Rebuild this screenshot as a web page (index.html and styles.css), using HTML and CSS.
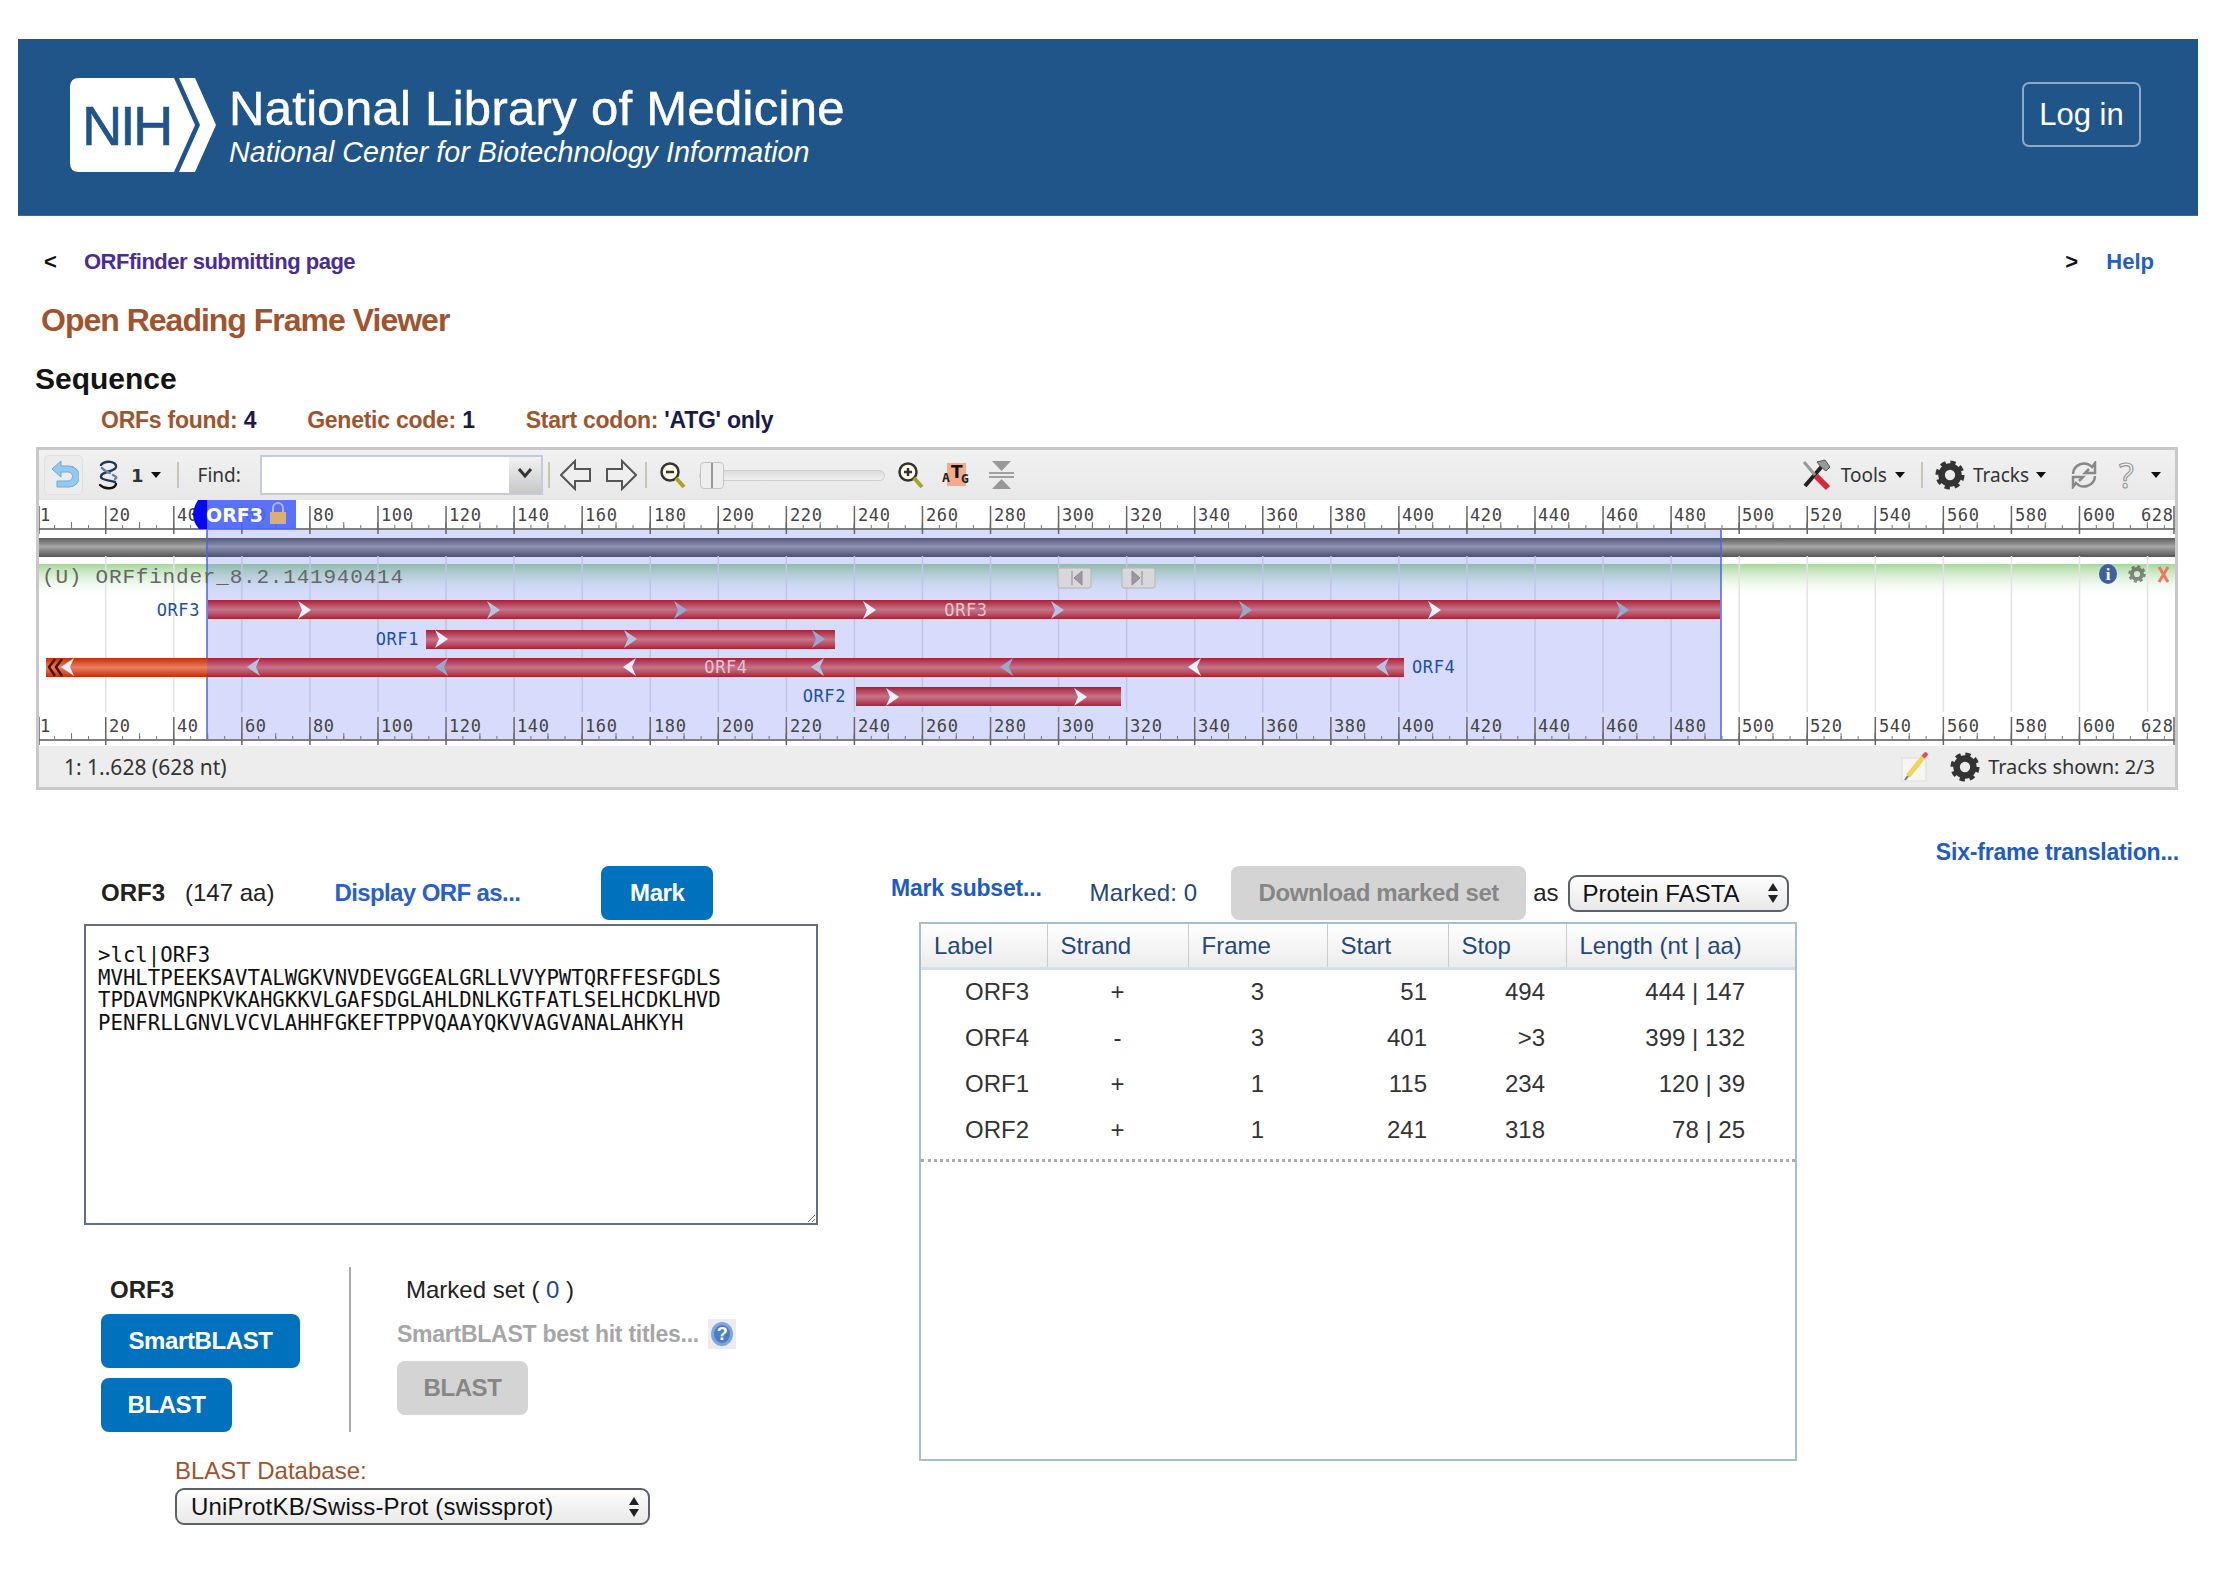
FILE: index.html
```html
<!DOCTYPE html>
<html lang="en">
<head>
  <meta charset="UTF-8" />
  <title>Open Reading Frame Viewer</title>
  <link rel="stylesheet" href="styles.css">
</head>
<body>
  <header class="banner">
    <div class="brand">
      <svg class="nih-logo" width="146" height="94" viewBox="0 0 146 94">
        <path d="M9 0 H104 L125 47 L104 94 H9 Q0 94 0 85 V9 Q0 0 9 0 Z" fill="#fff"/>
        <path d="M109 0 H125 L146 47 L125 94 H109 L130 47 Z" fill="#fff"/>
        <text class="nih-text" x="12" y="67">NIH</text>
      </svg>
      <div class="brand-text">
        <div class="brand-title">National Library of Medicine</div>
        <div class="brand-sub">National Center for Biotechnology Information</div>
      </div>
    </div>
    <button class="login">Log in</button>
  </header>

  <nav class="toplinks">
    <div><span class="chev">&lt;</span><a class="back-link">ORFfinder submitting page</a></div>
    <div><span class="chev chev-right">&gt;</span><a class="help-link">Help</a></div>
  </nav>

  <h1 class="page-title">Open Reading Frame Viewer</h1>
  <h2 class="section-title">Sequence</h2>
  <div class="orf-info">
    <span class="info-item">ORFs found: <b>4</b></span>
    <span class="info-item">Genetic code: <b>1</b></span>
    <span class="info-item">Start codon: <b>'ATG' only</b></span>
  </div>

  <svg class="svg-defs" width="0" height="0">
    <defs>
      <symbol id="gear" viewBox="0 0 32 32">
        <circle cx="16" cy="16" r="9" fill="none" stroke="#333" stroke-width="7"/>
        <circle cx="16" cy="16" r="13.5" fill="none" stroke="#333" stroke-width="4" stroke-dasharray="5.6 5"/>
      </symbol>
      <linearGradient id="barRed" x1="0" y1="0" x2="0" y2="1">
        <stop offset="0" stop-color="#ab1f33"/><stop offset=".25" stop-color="#b94a5f"/>
        <stop offset=".5" stop-color="#c4748a"/><stop offset=".8" stop-color="#b9465c"/>
        <stop offset="1" stop-color="#ab1f33"/>
      </linearGradient>
      <linearGradient id="barOrange" x1="0" y1="0" x2="0" y2="1">
        <stop offset="0" stop-color="#c92a08"/><stop offset=".5" stop-color="#e8805f"/>
        <stop offset="1" stop-color="#c92a08"/>
      </linearGradient>
      <linearGradient id="barGrey" x1="0" y1="0" x2="0" y2="1">
        <stop offset="0" stop-color="#5c5c5c"/><stop offset=".45" stop-color="#a6a6a6"/>
        <stop offset="1" stop-color="#555"/>
      </linearGradient>
      <linearGradient id="trackGreen" x1="0" y1="0" x2="0" y2="1">
        <stop offset="0" stop-color="#a5d79a"/><stop offset="1" stop-color="#fff" stop-opacity="0"/>
      </linearGradient>
      <polygon id="arR" points="-6,-9 7,0 -6,9 -2,0"/>
      <polygon id="arL" points="6,-9 -7,0 6,9 2,0"/>
      <g id="ruler">
        <line x1="37" x2="2175" y1="29" y2="29" stroke="#808080" stroke-width="2"/>
        <line x1="37" x2="2175" y1="26.5" y2="26.5" stroke="#777" stroke-width="3" stroke-dasharray="1 16.015"/>
        <line x1="37" x2="2175" y1="25" y2="25" stroke="#777" stroke-width="6" stroke-dasharray="1 33.03"/>
        <line x1="105" x2="2085" y1="20" y2="20" stroke="#666" stroke-width="28" stroke-dasharray="1.5 66.56"/>
        <line x1="2174" x2="2174" y1="6" y2="34" stroke="#666" stroke-width="1.5"/>
        <line x1="39" x2="39" y1="6" y2="34" stroke="#666" stroke-width="1.5"/>
        <text class="ruler-num" y="21">
          <tspan x="40">1</tspan><tspan x="109">20</tspan><tspan x="177">40</tspan><tspan x="245">60</tspan>
          <tspan x="313">80</tspan><tspan x="381">100</tspan><tspan x="449">120</tspan><tspan x="517">140</tspan>
          <tspan x="585">160</tspan><tspan x="654">180</tspan><tspan x="722">200</tspan><tspan x="790">220</tspan>
          <tspan x="858">240</tspan><tspan x="926">260</tspan><tspan x="994">280</tspan><tspan x="1062">300</tspan>
          <tspan x="1130">320</tspan><tspan x="1198">340</tspan><tspan x="1266">360</tspan><tspan x="1334">380</tspan>
          <tspan x="1402">400</tspan><tspan x="1470">420</tspan><tspan x="1538">440</tspan><tspan x="1606">460</tspan>
          <tspan x="1674">480</tspan><tspan x="1742">500</tspan><tspan x="1810">520</tspan><tspan x="1879">540</tspan>
          <tspan x="1947">560</tspan><tspan x="2015">580</tspan><tspan x="2083">600</tspan><tspan x="2141">628</tspan>
        </text>
      </g>
    </defs>
  </svg>

  <section class="viewer">
    <div class="viewer-toolbar">
      <span class="undo-btn">
        <svg width="30" height="30" viewBox="0 0 30 30"><path d="M3 9 L12 1 V6 H20 A10 10 0 0 1 20 27 H8 V21 H19 A4.5 4.5 0 0 0 19 12 H12 V17 Z" fill="#93c9ef" stroke="#6aa8d8"/></svg>
      </span>
      <svg class="helix" width="27" height="30" viewBox="0 0 27 30" fill="none" stroke-width="2.4" stroke-linecap="round">
        <path d="M6 5 C10 0 22 1 21 7 C20 12 7 11 6 16 C5 20 14 20 20 22" stroke="#1c3a55"/>
        <path d="M21 24 C20 29 10 30 5 25" stroke="#111"/>
        <path d="M7 8 C9 11 13 12 15 13 M18 15 C22 17 22 18 20 19" stroke="#6b8298"/>
      </svg>
      <b class="tb-num">1</b><i class="caret caret-num"></i>
      <span class="tb-sep sep-a"></span>
      <span class="tb-label find-label">Find:</span>
      <span class="find-box"><span class="find-input"></span><span class="find-arrow"><svg width="16" height="12" viewBox="0 0 16 12"><path d="M2 2 L8 9 L14 2" fill="none" stroke="#333" stroke-width="3"/></svg></span></span>
      <span class="tb-sep sep-b"></span>
      <svg class="arrow-l" width="32" height="32" viewBox="0 0 32 32"><polygon points="1,16 15,2 15,10 30,10 30,22 15,22 15,30" fill="#efefef" stroke="#555" stroke-width="2"/></svg>
      <svg class="arrow-r" width="32" height="32" viewBox="0 0 32 32"><polygon points="31,16 17,2 17,10 2,10 2,22 17,22 17,30" fill="#efefef" stroke="#555" stroke-width="2"/></svg>
      <span class="tb-sep sep-c"></span>
      <svg class="zoom-out" width="27" height="28" viewBox="0 0 27 28"><circle cx="11" cy="11" r="8.5" fill="#fdfbe8" stroke="#333" stroke-width="2.5"/><path d="M7 11 H15" stroke="#333" stroke-width="2.5"/><path d="M17 17 L25 26" stroke="#a8a428" stroke-width="4"/></svg>
      <span class="slider"><span class="slider-knob"></span></span>
      <svg class="zoom-in" width="27" height="28" viewBox="0 0 27 28"><circle cx="11" cy="11" r="8.5" fill="#fdfbe8" stroke="#333" stroke-width="2.5"/><path d="M7 11 H15 M11 7 V15" stroke="#333" stroke-width="2.5"/><path d="M17 17 L25 26" stroke="#a8a428" stroke-width="4"/></svg>
      <svg class="atg" width="28" height="24" viewBox="0 0 28 24"><rect x="5" y="0" width="19" height="23" fill="#f2ab8e"/><text class="atg-text" x="0" y="19">A</text><text class="atg-t" x="9" y="15">T</text><text class="atg-text" x="19" y="20">G</text></svg>
      <svg class="fit" width="25" height="28" viewBox="0 0 25 28"><path d="M3 0 H22 L12.5 10 Z M3 28 H22 L12.5 18 Z" fill="#999"/><path d="M0 12 H25 M0 16 H25" stroke="#888" stroke-width="1.5"/></svg>

      <span class="tb-spacer"></span>

      <svg class="tools-icon" width="30" height="32" viewBox="0 0 30 32"><path d="M4 27 L22 6" stroke="#222" stroke-width="4"/><path d="M16 3 L24 1 L29 8 L25 12 L20 8 Z" fill="#999" stroke="#555"/><path d="M3 3 L14 16" stroke="#999" stroke-width="3"/><path d="M15 17 L27 29" stroke="#d8283a" stroke-width="6"/></svg>
      <span class="tb-label tools-label">Tools</span><i class="caret caret-tools"></i>
      <span class="tb-sep sep-d"></span>
      <svg class="gear-icon" width="30" height="30"><use href="#gear"/></svg>
      <span class="tb-label tracks-label">Tracks</span><i class="caret caret-tracks"></i>
      <svg class="refresh" width="28" height="28" viewBox="0 0 28 28" fill="none" stroke="#888" stroke-width="2.5"><path d="M3 13 A11 11 0 0 1 22 6 L25 2 V12 H15 L19 8"/><path d="M25 15 A11 11 0 0 1 6 22 L3 26 V16 H13 L9 20"/></svg>
      <span class="help-q">?</span>
      <i class="caret caret-help"></i>
    </div>

    <svg class="viewer-canvas" width="2136" height="246" viewBox="39 500 2136 246">
      <!-- ruler, grid, seq bar -->
      <rect x="39" y="500" width="2136" height="246" fill="#fff"/>
      <rect x="39" y="538" width="2136" height="19" fill="url(#barGrey)"/>
      <rect x="39" y="564" width="2136" height="34" fill="url(#trackGreen)"/>
      <line x1="105" x2="2175" y1="634" y2="634" stroke="#e3e3e3" stroke-width="156" stroke-dasharray="1.5 66.56"/>
      <rect x="207" y="529" width="1514" height="211" fill="#2846f0" fill-opacity=".19"/>
      <path d="M207 500 V740 M1721 529 V740" stroke="#4a62f2" stroke-width="1.5"/>
      <use href="#ruler" y="500"/>
      <use href="#ruler" y="711"/>

      <!-- selection handle -->
      <path d="M207 500 H198 Q193 508 193 514 Q193 522 199 529 H207 Z" fill="#0808f0"/>
      <rect x="207" y="500" width="89" height="29" fill="#4a66fb" fill-opacity=".92"/>
      <text class="handle-label" x="206" y="522">ORF3</text>
      <path d="M273 513 V508 A5 5 0 0 1 283 508 V513" fill="none" stroke="#b9b4c8" stroke-width="2"/>
      <rect x="270" y="512" width="16" height="12" fill="#d9b071"/>

      <text class="track-title" x="42" y="583">(U) ORFfinder_8.2.141940414</text>

      <!-- orf bars -->
      <rect x="208" y="600" width="1512" height="19" fill="url(#barRed)"/>
      <rect x="426" y="630" width="409" height="19" fill="url(#barRed)"/>
      <rect x="46" y="658" width="161" height="19" fill="url(#barOrange)"/>
      <rect x="207" y="658" width="1197" height="19" fill="url(#barRed)"/>
      <rect x="856" y="687" width="265" height="19" fill="url(#barRed)"/>

      <g class="ar-a"><use href="#arR" x="304" y="610"/><use href="#arR" x="869" y="610"/><use href="#arR" x="1434" y="610"/>
        <use href="#arR" x="441" y="639"/><use href="#arR" x="892" y="697"/><use href="#arR" x="1080" y="697"/>
        <use href="#arL" x="68" y="667"/><use href="#arL" x="630" y="667"/><use href="#arL" x="1195" y="667"/></g>
      <g class="ar-b"><use href="#arR" x="493" y="610"/><use href="#arR" x="1057" y="610"/>
        <use href="#arR" x="630" y="639"/><use href="#arL" x="254" y="667"/><use href="#arL" x="818" y="667"/><use href="#arL" x="1383" y="667"/></g>
      <g class="ar-c"><use href="#arR" x="680" y="610"/><use href="#arR" x="1245" y="610"/><use href="#arR" x="1622" y="610"/>
        <use href="#arR" x="818" y="639"/><use href="#arL" x="442" y="667"/><use href="#arL" x="1007" y="667"/></g>
      <path d="M55 659 L49 667 L55 676 M62 659 L56 667 L62 676" fill="none" stroke="#4a1208" stroke-width="2.5"/>

      <text class="orf-label" x="200" y="616" text-anchor="end">ORF3</text>
      <text class="orf-label" x="419" y="645" text-anchor="end">ORF1</text>
      <text class="orf-label" x="1412" y="673">ORF4</text>
      <text class="orf-label" x="846" y="702" text-anchor="end">ORF2</text>
      <text class="orf-inner" x="966" y="616" text-anchor="middle">ORF3</text>
      <text class="orf-inner" x="726" y="673" text-anchor="middle">ORF4</text>

      <!-- track controls -->
      <g class="nav-btn"><rect x="1058" y="568" width="33" height="20" rx="2"/><path d="M1072 571 V585 M1082 571 L1074 578 L1082 585 Z" class="nav-mark"/></g>
      <g class="nav-btn"><rect x="1122" y="568" width="33" height="20" rx="2"/><path d="M1142 571 V585 M1132 571 L1140 578 L1132 585 Z" class="nav-mark"/></g>
      <ellipse cx="2108" cy="574" rx="9" ry="10" fill="#3f5f9f"/>
      <text class="info-i" x="2108" y="580" text-anchor="middle">i</text>
      <use href="#gear" x="2128" y="565" width="18" height="18" opacity=".55"/>
      <path d="M2159 567 L2168 582 M2168 567 L2159 582" stroke="#ea7a5c" stroke-width="3"/>
    </svg>

    <div class="viewer-footer">
      <span class="range">1: 1..628 (628 nt)</span>
      <svg class="pencil" width="30" height="30" viewBox="0 0 30 30"><rect x="1" y="6" width="24" height="23" fill="#f6f6f0" stroke="#ddd"/><path d="M7 24 L24 3" stroke="#f0d35a" stroke-width="5"/><path d="M22 5 L26 1" stroke="#d8505a" stroke-width="4"/><path d="M4 28 L7 24" stroke="#777" stroke-width="2"/></svg>
      <svg class="gear-foot" width="30" height="30"><use href="#gear"/></svg>
      <span class="tracks-shown">Tracks shown: 2/3</span>
    </div>
  </section>

  <main class="results">
    <div class="left-col">
      <div class="orf-head">
        <b class="orf-name">ORF3</b>
        <span class="orf-len">(147 aa)</span>
        <a class="display-link">Display ORF as...</a>
        <button class="btn btn-mark">Mark</button>
      </div>
      <textarea class="seq-box" spellcheck="false">&gt;lcl|ORF3
MVHLTPEEKSAVTALWGKVNVDEVGGEALGRLLVVYPWTQRFFESFGDLS
TPDAVMGNPKVKAHGKKVLGAFSDGLAHLDNLKGTFATLSELHCDKLHVD
PENFRLLGNVLVCVLAHHFGKEFTPPVQAAYQKVVAGVANALAHKYH</textarea>

      <div class="blast-row">
        <div class="blast-single">
          <div class="blast-name">ORF3</div>
          <button class="btn btn-smart">SmartBLAST</button>
          <button class="btn btn-blast">BLAST</button>
        </div>
        <div class="blast-marked">
          <div class="marked-set">Marked set ( <span class="marked-count">0</span> )</div>
          <div class="best-hit">SmartBLAST best hit titles...
            <span class="help-badge"><svg width="24" height="26" viewBox="0 0 24 26"><ellipse cx="12" cy="13" rx="11" ry="12" fill="#7ea6dc"/><ellipse cx="12" cy="13" rx="8" ry="9" fill="#4a7cc8"/><text class="badge-q" x="12" y="19" text-anchor="middle">?</text></svg></span>
          </div>
          <button class="btn btn-off btn-blast-off">BLAST</button>
        </div>
      </div>

      <div class="db-block">
        <div class="db-label">BLAST Database:</div>
        <div class="select-wrap db-select">
          <select><option>UniProtKB/Swiss-Prot (swissprot)</option></select>
          <svg class="updown" width="12" height="22" viewBox="0 0 12 22"><path d="M6 1 L11 9 H1 Z M6 21 L11 13 H1 Z" fill="#222"/></svg>
        </div>
      </div>
    </div>

    <div class="right-col">
      <div class="six-frame"><a>Six-frame translation...</a></div>
      <div class="table-tools">
        <a class="mark-subset">Mark subset...</a>
        <span class="marked-num">Marked: 0</span>
        <button class="btn btn-off btn-download">Download marked set</button>
        <span class="as-word">as</span>
        <div class="select-wrap format-select">
          <select><option>Protein FASTA</option></select>
          <svg class="updown" width="12" height="22" viewBox="0 0 12 22"><path d="M6 1 L11 9 H1 Z M6 21 L11 13 H1 Z" fill="#222"/></svg>
        </div>
      </div>
      <div class="table-box">
        <table class="orf-table">
          <thead>
            <tr><th class="c-label">Label</th><th class="c-strand">Strand</th><th class="c-frame">Frame</th><th class="c-start">Start</th><th class="c-stop">Stop</th><th class="c-length">Length (nt | aa)</th></tr>
          </thead>
          <tbody>
            <tr><td class="c-label">ORF3</td><td class="c-strand">+</td><td class="c-frame">3</td><td class="c-start">51</td><td class="c-stop">494</td><td class="c-length">444 | 147</td></tr>
            <tr><td class="c-label">ORF4</td><td class="c-strand">-</td><td class="c-frame">3</td><td class="c-start">401</td><td class="c-stop">&gt;3</td><td class="c-length">399 | 132</td></tr>
            <tr><td class="c-label">ORF1</td><td class="c-strand">+</td><td class="c-frame">1</td><td class="c-start">115</td><td class="c-stop">234</td><td class="c-length">120 | 39</td></tr>
            <tr><td class="c-label">ORF2</td><td class="c-strand">+</td><td class="c-frame">1</td><td class="c-start">241</td><td class="c-stop">318</td><td class="c-length">78 | 25</td></tr>
          </tbody>
        </table>
        <div class="table-rule"></div>
      </div>
    </div>
  </main>
</body>
</html>
```

FILE: styles.css
```css
* {
  box-sizing: border-box;
}

body {
  margin: 0;
  padding: 39px 0 0;
  background-color: #fff;
  color: #222;
  font-family: "Liberation Sans", Arial, sans-serif;
}

a {
  cursor: pointer;
}

/* banner */
.banner {
  display: flex;
  justify-content: space-between;
  align-items: center;
  height: 177px;
  margin: 0 24px 0 18px;
  padding: 0 57px 5px 52px;
  background-color: #20558a;
  border-bottom: 1px solid #3a6a9a;
  color: #fff;
}

.brand {
  display: flex;
  align-items: center;
  gap: 13px;
}

.nih-logo {
  display: block;
}

.nih-text {
  font-size: 56px;
  letter-spacing: -2.5px;
  fill: #20558a;
  stroke: #20558a;
  stroke-width: .6px;
}

.brand-title {
  font-size: 49px;
  letter-spacing: .3px;
  line-height: 54px;
  -webkit-text-stroke: .5px #fff;
}

.brand-sub {
  font-size: 28.7px;
  font-style: italic;
  line-height: 34px;
}

.login {
  align-self: flex-start;
  width: 119px;
  height: 65px;
  margin-top: 43px;
  padding: 0;
  background: transparent;
  border: 2px solid #8ea9c6;
  border-radius: 7px;
  color: #fff;
  font-family: inherit;
  font-size: 31px;
}

/* top of page */
.toplinks {
  display: flex;
  justify-content: space-between;
  align-items: center;
  height: 36px;
  margin: 28px 68px 0 44px;
  font-size: 22px;
  font-weight: 700;
}

.chev {
  display: inline-block;
  width: 40px;
  color: #111;
}

.chev-right {
  width: 41px;
}

.back-link {
  color: #4b2c97;
  letter-spacing: -.5px;
}

.help-link {
  color: #2460c4;
}

.page-title {
  height: 40px;
  margin: 20px 0 0 41px;
  color: #a0542e;
  font-size: 32px;
  letter-spacing: -1px;
  line-height: 40px;
}

.section-title {
  height: 40px;
  margin: 19px 0 0 35px;
  color: #141414;
  font-size: 30px;
  line-height: 40px;
}

.orf-info {
  display: flex;
  height: 32px;
  margin: 5px 0 0 101px;
  color: #a0542e;
  font-size: 23px;
  font-weight: 700;
  letter-spacing: -.25px;
  line-height: 33px;
}

.orf-info b {
  color: #1a1a4a;
}

.info-item {
  margin-right: 51px;
}

.svg-defs {
  position: absolute;
}

/* viewer */
.viewer {
  width: 2142px;
  height: 343px;
  margin: 11px 0 0 36px;
  background-color: #ededed;
  border: 3px solid #c9c7c7;
}

.viewer-toolbar {
  display: flex;
  align-items: center;
  height: 50px;
  padding: 0 14px 0 5px;
  background: linear-gradient(#f1f1f1, #e8e8e8);
  font-family: "Noto Sans", sans-serif;
  font-size: 19px;
  color: #333;
}

.viewer-toolbar svg {
  flex: none;
}

.viewer-canvas {
  display: block;
}

.undo-btn {
  display: flex;
  justify-content: center;
  align-items: center;
  width: 39px;
  height: 40px;
  background-color: #ececec;
  border: 1px solid #e0e0e0;
  border-radius: 5px;
}

.helix {
  margin-left: 12px;
}

.tb-num {
  margin-left: 9px;
  font-family: "DejaVu Sans", sans-serif;
  font-size: 18px;
}

.caret {
  flex: none;
  width: 0;
  height: 0;
  border-top: 6px solid #111;
  border-left: 5px solid transparent;
  border-right: 5px solid transparent;
}

.caret-num {
  margin-left: 7px;
}

.tb-sep {
  flex: none;
  width: 2px;
  height: 26px;
  background-color: #c8c4b8;
}

.sep-a {
  margin-left: 16px;
}

.find-label {
  margin-left: 19px;
}

.find-box {
  display: flex;
  width: 283px;
  height: 40px;
  margin-left: 19px;
  border: 2px solid #c5cbd8;
}

.find-input {
  flex: 1;
  background-color: #fff;
}

.find-arrow {
  display: flex;
  justify-content: center;
  align-items: flex-start;
  width: 32px;
  padding-top: 10px;
  background: linear-gradient(#f2f2f2, #c8c8c8);
}

.sep-b {
  margin-left: 5px;
}

.arrow-l {
  margin-left: 10px;
}

.arrow-r {
  margin-left: 13px;
}

.sep-c {
  margin-left: 8px;
}

.zoom-out {
  margin-left: 12px;
}

.slider {
  position: relative;
  flex: none;
  width: 186px;
  height: 11px;
  margin-left: 13px;
  background: linear-gradient(#dcdcdc, #f0f0f0);
  border: 1px solid #cfcfcf;
  border-radius: 6px;
}

.slider-knob {
  position: absolute;
  left: 0;
  top: -9px;
  width: 24px;
  height: 27px;
  background: linear-gradient(90deg, #eee 45%, #999 45%, #999 55%, #eee 55%);
  border: 1px solid #c4c4c4;
  border-radius: 4px;
}

.zoom-in {
  margin-left: 12px;
}

.atg {
  margin-left: 18px;
}

.atg-text {
  font-family: "DejaVu Sans Mono", monospace;
  font-size: 13px;
  font-weight: 700;
  fill: #222;
}

.atg-t {
  font-family: "DejaVu Sans", sans-serif;
  font-size: 17px;
  font-weight: 700;
  fill: #111;
}

.fit {
  margin-left: 19px;
}

.tb-spacer {
  flex: 1;
}

.tools-label {
  margin-left: 10px;
}

.caret-tools {
  margin-left: 8px;
}

.sep-d {
  margin-left: 16px;
}

.gear-icon {
  margin-left: 12px;
}

.tracks-label {
  margin-left: 8px;
}

.caret-tracks {
  margin-left: 7px;
}

.refresh {
  margin-left: 24px;
}

.help-q {
  width: 19px;
  margin-left: 21px;
  color: #f2f2f2;
  font-size: 34px;
  line-height: 32px;
  -webkit-text-stroke: 1.2px #999;
}

.caret-help {
  margin-left: 13px;
}

.ruler-num {
  font-family: "DejaVu Sans Mono", monospace;
  font-size: 17px;
  letter-spacing: .6px;
  fill: #444;
}

.handle-label {
  font-family: "DejaVu Sans", sans-serif;
  font-size: 19px;
  font-weight: 700;
  fill: #fff;
}

.track-title {
  font-family: "Liberation Mono", monospace;
  font-size: 21px;
  letter-spacing: .8px;
  fill: #666;
}

.orf-label {
  font-family: "DejaVu Sans Mono", monospace;
  font-size: 17px;
  letter-spacing: .6px;
  fill: #1b50a5;
}

.orf-inner {
  font-family: "DejaVu Sans Mono", monospace;
  font-size: 17px;
  letter-spacing: .6px;
  fill: #e4c6d0;
}

.ar-a {
  fill: #eef0fb;
}

.ar-b {
  fill: #b9c1e2;
}

.ar-c {
  fill: #9aa7cf;
}

.nav-btn rect {
  fill: #d8d8dc;
  stroke: #b4b4b8;
}

.nav-mark {
  fill: #9a9aa0;
  stroke: #8a8a90;
}

.info-i {
  font-family: "Liberation Serif", serif;
  font-size: 17px;
  font-weight: 700;
  fill: #fff;
}

.viewer-footer {
  display: flex;
  align-items: center;
  height: 41px;
  padding: 0 20px 0 25px;
  background-color: #ededed;
  font-family: "Noto Sans", sans-serif;
  font-size: 20px;
  color: #333;
}

.range {
  flex: 1;
  font-size: 21px;
}

.gear-foot {
  margin-left: 19px;
}

.tracks-shown {
  margin-left: 8px;
}

/* bottom area */
.results {
  display: flex;
  margin-top: 48px;
}

.left-col {
  flex: none;
  width: 734px;
  margin-left: 84px;
  padding-top: 28px;
}

.right-col {
  flex: none;
  width: 1288px;
  margin-left: 73px;
}

.btn {
  display: block;
  height: 54px;
  padding: 0;
  background-color: #0071bc;
  border: none;
  border-radius: 8px;
  color: #fff;
  font-family: inherit;
  font-size: 24px;
  font-weight: 700;
  letter-spacing: -.4px;
}

.btn-off {
  background-color: #d4d4d4;
  color: #868686;
}

.orf-head {
  display: flex;
  align-items: center;
  height: 54px;
  padding-left: 17px;
  font-size: 24px;
}

.orf-len {
  margin-left: 20px;
}

.display-link {
  margin-left: 60px;
  color: #2a5fc9;
  font-weight: 700;
  letter-spacing: -.6px;
}

.btn-mark {
  width: 112px;
  margin-left: 81px;
}

.seq-box {
  display: block;
  width: 734px;
  height: 301px;
  margin-top: 4px;
  padding: 18px 12px;
  background-color: #fff;
  border: 2px solid #666e7c;
  color: #111;
  font-family: "DejaVu Sans Mono", monospace;
  font-size: 20.7px;
  line-height: 22.6px;
  overflow: hidden;
}

.blast-row {
  display: flex;
  height: 165px;
  margin-top: 42px;
  font-size: 24px;
}

.blast-single {
  width: 267px;
  padding-left: 17px;
  border-right: 2px solid #aaa;
}

.blast-name {
  height: 47px;
  padding-left: 9px;
  font-weight: 700;
  line-height: 46px;
}

.btn-smart {
  width: 199px;
}

.btn-blast {
  width: 131px;
  margin-top: 10px;
}

.blast-marked {
  padding-left: 46px;
}

.marked-set {
  height: 52px;
  padding-left: 9px;
  line-height: 46px;
}

.marked-count {
  color: #1f4a8c;
}

.best-hit {
  display: flex;
  align-items: center;
  gap: 9px;
  height: 30px;
  color: #a6a6a6;
  font-weight: 700;
  font-size: 23px;
  letter-spacing: -.25px;
}

.help-badge {
  display: flex;
  justify-content: center;
  align-items: center;
  width: 28px;
  height: 30px;
  background-color: #ebebf0;
}

.badge-q {
  font-size: 18px;
  font-weight: 700;
  fill: #fff;
}

.btn-blast-off {
  width: 131px;
  margin-top: 12px;
}

.db-block {
  margin: 24px 0 0 91px;
}

.db-label {
  height: 30px;
  color: #a0542e;
  font-size: 24px;
  line-height: 30px;
}

.select-wrap {
  position: relative;
}

.select-wrap select {
  display: block;
  width: 100%;
  height: 100%;
  appearance: none;
  background: linear-gradient(#fdfdfd, #e9e9e9);
  border: 2px solid #5c6068;
  border-radius: 9px;
  color: #111;
  font-family: inherit;
  font-size: 24px;
}

.updown {
  position: absolute;
  right: 10px;
  top: 50%;
  margin-top: -11px;
}

.db-select {
  width: 475px;
  height: 37px;
  margin-top: 2px;
}

.db-select select {
  padding-left: 14px;
  letter-spacing: .2px;
}

.format-select {
  width: 221px;
  height: 37px;
  margin-left: 9px;
}

.format-select select {
  padding-left: 13px;
}

.six-frame {
  height: 28px;
  color: #1f5bc4;
  font-size: 23px;
  font-weight: 700;
  letter-spacing: -.2px;
  line-height: 28px;
  text-align: right;
}

.table-tools {
  display: flex;
  align-items: center;
  height: 54px;
  font-size: 24px;
}

.mark-subset {
  margin-bottom: 10px;
  color: #1f5bc4;
  font-size: 23px;
  font-weight: 700;
  letter-spacing: -.2px;
}

.marked-num {
  margin-left: 48px;
  color: #24477c;
  letter-spacing: .1px;
}

.btn-download {
  width: 295px;
  margin-left: 34px;
}

.as-word {
  margin-left: 7px;
}

.table-box {
  width: 878px;
  height: 539px;
  margin: 2px 0 0 28px;
  border: 2px solid #a6bdd8;
}

.orf-table {
  width: 874px;
  border-collapse: collapse;
  table-layout: fixed;
  font-size: 24px;
}

.orf-table th {
  height: 44px;
  padding: 2px 0 0 13px;
  background: linear-gradient(#fff, #ececec);
  border-bottom: 3px solid #d5e0ea;
  border-right: 1px solid #c8cdd2;
  color: #24477c;
  font-weight: 400;
  text-align: left;
}

.orf-table th:last-child {
  border-right: none;
}

.orf-table td {
  height: 46.4px;
  padding: 0;
  color: #333;
}

th.c-label { width: 126px; }
th.c-strand { width: 141px; }
th.c-frame { width: 139px; }
th.c-start { width: 121px; }
th.c-stop { width: 118px; }

td.c-label {
  padding-left: 44px;
}

td.c-strand,
td.c-frame {
  text-align: center;
}

td.c-start,
td.c-stop {
  padding-right: 21px;
  text-align: right;
}

td.c-length {
  padding-right: 50px;
  text-align: right;
}

.table-rule {
  margin-top: 5px;
  border-top: 3px dotted #aaa;
}
```
